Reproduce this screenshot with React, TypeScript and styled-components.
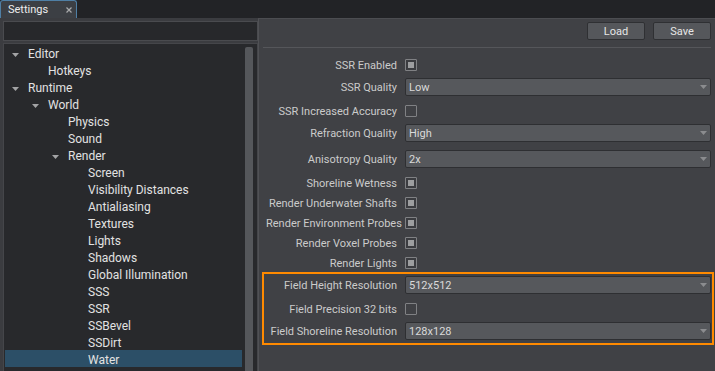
import React from "react";
import styled, { createGlobalStyle } from "styled-components";

const GlobalStyle = createGlobalStyle`
  html, body { margin: 0; padding: 0; background: #222326; }
  body { font-family: Roboto, "Liberation Sans", Arial, sans-serif; }
  * { box-sizing: border-box; }
`;

const Window = styled.div`
  width: 715px;
  height: 371px;
  overflow: hidden;
  display: flex;
  flex-direction: column;
  background: #3b3c40;
`;

const TabBar = styled.div`
  height: 18px;
  flex: none;
  display: flex;
  background: #222326;
`;

const Tab = styled.div`
  width: 77px;
  height: 18px;
  display: flex;
  align-items: center;
  justify-content: space-between;
  padding: 0 4px 0 7px;
  background: #3c3f44;
  border: 1px solid #4f7fa5;
  border-bottom: none;
  border-radius: 3px 3px 0 0;
  color: #ededed;
  font-size: 11px;
`;

const Body = styled.div`
  flex: 1;
  display: flex;
  min-height: 0;
`;

const Sidebar = styled.div`
  width: 258px;
  flex: none;
  display: flex;
  flex-direction: column;
  gap: 2px;
  padding: 3px 0 0 3px;
`;

const Search = styled.div`
  height: 20px;
  flex: none;
  background: #27282b;
  border: 1px solid #4a4b4f;
`;

const TreeBox = styled.div`
  flex: 1;
  display: flex;
  margin-bottom: -10px;
  background: #28292c;
  border: 1px solid #45464a;
`;

const TreeList = styled.div`
  flex: 1;
  display: flex;
  flex-direction: column;
  padding: 0 2px 0 1px;
`;

const TreeRow = styled.div<{ $depth: number; $selected?: boolean }>`
  height: 17px;
  flex: none;
  display: flex;
  align-items: center;
  padding: 3px 0 0 ${(p) => 7 + p.$depth * 20}px;
  background: ${(p) => (p.$selected ? "#2c4f67" : "transparent")};
  color: #e2e2e2;
  font-size: 12px;
  white-space: nowrap;
`;

const ArrowSlot = styled.span`
  width: 16px;
  flex: none;
  display: flex;
  align-items: center;
  padding-top: 1px;
`;

const ScrollTrack = styled.div`
  width: 13px;
  flex: none;
  display: flex;
  padding: 3px 4px 0 1px;
`;

const ScrollThumb = styled.div`
  flex: 1;
  background: #55575b;
  border-radius: 2px 2px 0 0;
`;

const Panel = styled.div`
  flex: 1;
  display: flex;
  flex-direction: column;
  background: #404145;
  border-left: 1px solid #505155;
  border-top: 1px solid #4c4d51;
  padding: 3px 4px 0 4px;
`;

const ButtonBar = styled.div`
  display: flex;
  justify-content: flex-end;
  gap: 8px;
`;

const Button = styled.div`
  width: 58px;
  height: 18px;
  display: flex;
  align-items: center;
  justify-content: center;
  background: #55575b;
  border: 1px solid #2f3033;
  border-radius: 2px;
  color: #e6e6e6;
  font-size: 11px;
`;

const Separator = styled.div`
  height: 1px;
  margin-top: 7px;
  background: #55565a;
`;

const Form = styled.div`
  display: flex;
  flex-direction: column;
  margin-top: 6px;
  padding-left: 3px;
`;

const Highlight = styled.div`
  display: flex;
  flex-direction: column;
  margin: 0 -3px 0 -4px;
  padding: 0 3px 1px 4px;
  outline: 2px solid #ff8a00;
  outline-offset: -2px;
`;

const Row = styled.div<{ $kind: "check" | "combo" }>`
  display: grid;
  grid-template-columns: 131px 1fr;
  column-gap: 8px;
  align-items: center;
  height: ${(p) => (p.$kind === "check" ? 20 : 26)}px;
  padding-top: ${(p) => (p.$kind === "check" ? 2 : 0)}px;
`;

const Label = styled.span`
  text-align: right;
  white-space: nowrap;
  color: #cbcbcb;
  font-size: 11px;
`;

const CheckBox = styled.span<{ $checked: boolean }>`
  width: 12px;
  height: 12px;
  border: 1px solid #808184;
  border-radius: 1px;
  background: ${(p) => (p.$checked ? "#9d9ea0" : "#404145")};
  box-shadow: ${(p) => (p.$checked ? "inset 0 0 0 2px #3b3c40" : "none")};
`;

const Combo = styled.div`
  height: 18px;
  display: flex;
  align-items: center;
  justify-content: space-between;
  padding: 0 3px 0 3px;
  background: #56585c;
  border: 1px solid #2e2f32;
  border-radius: 2px;
  color: #dadada;
  font-size: 11px;
`;

const Arrow = ({ color }: { color: string }) => (
  <svg width="7" height="4" viewBox="0 0 7 4">
    <polygon points="0,0 7,0 3.5,4" fill={color} />
  </svg>
);

const CloseIcon = () => (
  <svg width="6" height="6" viewBox="0 0 6 6">
    <path d="M0.5 0.5 L5.5 5.5 M5.5 0.5 L0.5 5.5" stroke="#a9aaac" strokeWidth="1.2" />
  </svg>
);

type TreeItem = { label: string; depth: number; expanded?: boolean; selected?: boolean };

const tree: TreeItem[] = [
  { label: "Editor", depth: 0, expanded: true },
  { label: "Hotkeys", depth: 1 },
  { label: "Runtime", depth: 0, expanded: true },
  { label: "World", depth: 1, expanded: true },
  { label: "Physics", depth: 2 },
  { label: "Sound", depth: 2 },
  { label: "Render", depth: 2, expanded: true },
  { label: "Screen", depth: 3 },
  { label: "Visibility Distances", depth: 3 },
  { label: "Antialiasing", depth: 3 },
  { label: "Textures", depth: 3 },
  { label: "Lights", depth: 3 },
  { label: "Shadows", depth: 3 },
  { label: "Global Illumination", depth: 3 },
  { label: "SSS", depth: 3 },
  { label: "SSR", depth: 3 },
  { label: "SSBevel", depth: 3 },
  { label: "SSDirt", depth: 3 },
  { label: "Water", depth: 3, selected: true },
];

type Field =
  | { label: string; kind: "check"; checked: boolean }
  | { label: string; kind: "combo"; value: string };

const fields: Field[] = [
  { label: "SSR Enabled", kind: "check", checked: true },
  { label: "SSR Quality", kind: "combo", value: "Low" },
  { label: "SSR Increased Accuracy", kind: "check", checked: false },
  { label: "Refraction Quality", kind: "combo", value: "High" },
  { label: "Anisotropy Quality", kind: "combo", value: "2x" },
  { label: "Shoreline Wetness", kind: "check", checked: true },
  { label: "Render Underwater Shafts", kind: "check", checked: true },
  { label: "Render Environment Probes", kind: "check", checked: true },
  { label: "Render Voxel Probes", kind: "check", checked: true },
  { label: "Render Lights", kind: "check", checked: true },
];

const waterFields: Field[] = [
  { label: "Field Height Resolution", kind: "combo", value: "512x512" },
  { label: "Field Precision 32 bits", kind: "check", checked: false },
  { label: "Field Shoreline Resolution", kind: "combo", value: "128x128" },
];

const FieldRow = ({ f }: { f: Field }) => (
  <Row $kind={f.kind}>
    <Label>{f.label}</Label>
    {f.kind === "check" ? (
      <CheckBox $checked={f.checked} />
    ) : (
      <Combo>
        <span>{f.value}</span>
        <Arrow color="#8b8c8f" />
      </Combo>
    )}
  </Row>
);

export default function App() {
  return (
    <>
      <GlobalStyle />
      <Window>
        <TabBar>
          <Tab>
            <span>Settings</span>
            <CloseIcon />
          </Tab>
        </TabBar>
        <Body>
          <Sidebar>
            <Search />
            <TreeBox>
              <TreeList>
                {tree.map((t) => (
                  <TreeRow key={t.label} $depth={t.depth} $selected={t.selected}>
                    <ArrowSlot>{t.expanded && <Arrow color="#a3a3a5" />}</ArrowSlot>
                    <span>{t.label}</span>
                  </TreeRow>
                ))}
              </TreeList>
              <ScrollTrack>
                <ScrollThumb />
              </ScrollTrack>
            </TreeBox>
          </Sidebar>
          <Panel>
            <ButtonBar>
              <Button>Load</Button>
              <Button>Save</Button>
            </ButtonBar>
            <Separator />
            <Form>
              {fields.map((f) => (
                <FieldRow key={f.label} f={f} />
              ))}
              <Highlight>
                {waterFields.map((f) => (
                  <FieldRow key={f.label} f={f} />
                ))}
              </Highlight>
            </Form>
          </Panel>
        </Body>
      </Window>
    </>
  );
}
